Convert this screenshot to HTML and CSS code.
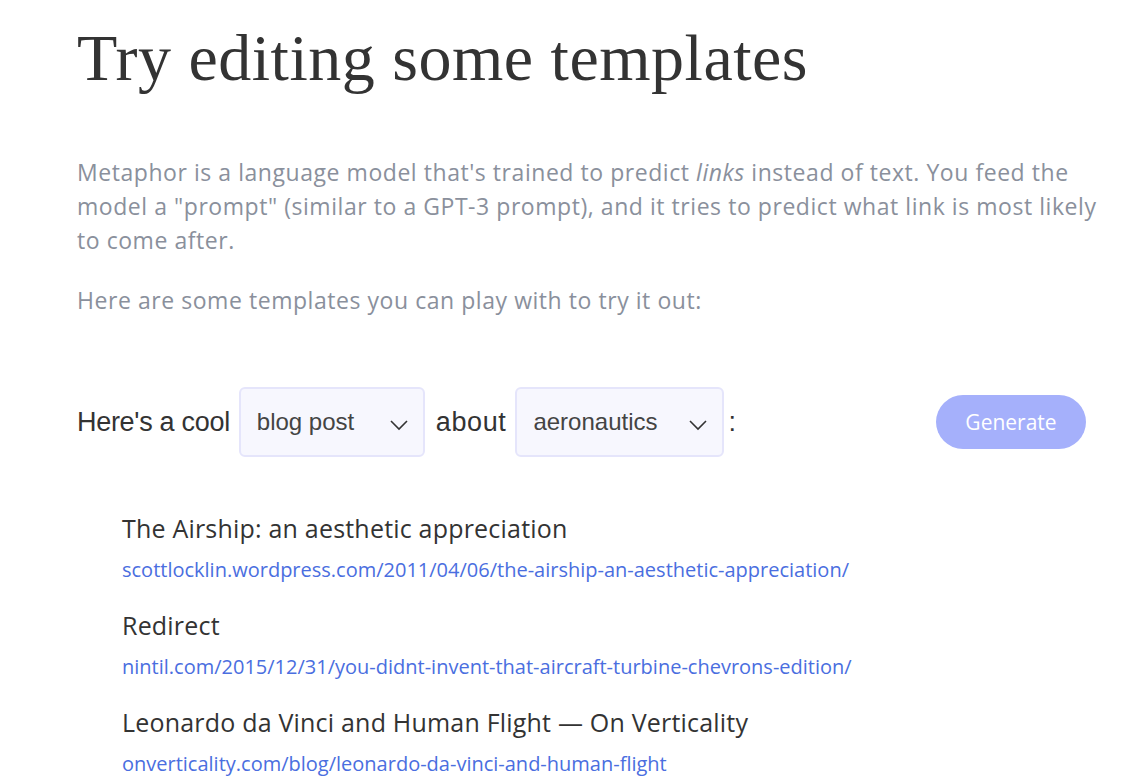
FILE: index.html
```html
<!DOCTYPE html>
<html>
<head>
<meta charset="utf-8">
<link rel="stylesheet" href="styles.css">
</head>
<body>
<main class="page">
  <h1 class="title">Try editing some templates</h1>
  <p class="intro">Metaphor is a language model that's trained to predict <em>links</em> instead of text. You feed the model a "prompt" (similar to a GPT-3 prompt), and it tries to predict what link is most likely to come after.</p>
  <p class="intro">Here are some templates you can play with to try it out:</p>

  <div class="prompt-row">
    <div class="prompt">
      <span class="word">Here's a cool</span>
      <div class="select">
        <span>blog post</span>
        <svg class="chev" viewBox="0 0 20 12" width="20" height="12"><path d="M2 2 L10 10 L18 2" fill="none" stroke="#333" stroke-width="1.6"/></svg>
      </div>
      <span class="word about">about</span>
      <div class="select wide">
        <span>aeronautics</span>
        <svg class="chev" viewBox="0 0 20 12" width="20" height="12"><path d="M2 2 L10 10 L18 2" fill="none" stroke="#333" stroke-width="1.6"/></svg>
      </div>
      <span class="word colon">:</span>
    </div>
    <button class="generate">Generate</button>
  </div>

  <ul class="results">
    <li class="result">
      <div class="r-title">The Airship: an aesthetic appreciation</div>
      <a class="r-url">scottlocklin.wordpress.com/2011/04/06/the-airship-an-aesthetic-appreciation/</a>
    </li>
    <li class="result">
      <div class="r-title">Redirect</div>
      <a class="r-url">nintil.com/2015/12/31/you-didnt-invent-that-aircraft-turbine-chevrons-edition/</a>
    </li>
    <li class="result">
      <div class="r-title">Leonardo da Vinci and Human Flight — On Verticality</div>
      <a class="r-url">onverticality.com/blog/leonardo-da-vinci-and-human-flight</a>
    </li>
  </ul>
</main>
</body>
</html>
```
FILE: styles.css
```css
html, body {
  margin: 0;
  padding: 0;
  background: #fff;
}
.page {
  padding: 18px 18px 0 77px;
  font-family: "Open Sans", "Noto Sans", sans-serif;
}
.title {
  margin: 0;
  font-family: "Liberation Serif", "DejaVu Serif", serif;
  font-weight: 400;
  font-size: 66px;
  line-height: 80px;
  color: #333;
  letter-spacing: 0.5px;
}
.intro {
  margin: 57px 0 0;
  font-size: 23px;
  line-height: 34px;
  letter-spacing: 0.55px;
  color: #8a909c;
}
.intro + .intro {
  margin-top: 26px;
}
.intro em {
  font-style: italic;
}
.prompt-row {
  margin: 70px 21px 0 0;
  display: flex;
  align-items: center;
  justify-content: space-between;
}
.prompt {
  display: flex;
  align-items: center;
  gap: 9px;
}
.word {
  font-family: "Liberation Sans", Arial, sans-serif;
  font-size: 27px;
  color: #333;
  letter-spacing: -0.3px;
}
.about {
  margin-left: 2px;
  letter-spacing: 0.6px;
}
.colon {
  margin-left: -5px;
}
.select {
  box-sizing: border-box;
  width: 186px;
  height: 70px;
  padding: 0 14px 0 16px;
  border: 2px solid #e5e5fb;
  border-radius: 6px;
  background: #f7f7fe;
  display: flex;
  align-items: center;
  justify-content: space-between;
  font-family: "Liberation Sans", Arial, sans-serif;
  font-size: 24px;
  color: #444;
}
.select.wide {
  width: 209px;
}
.chev {
  margin-top: 6px;
}
.generate {
  width: 150px;
  height: 54px;
  border: none;
  border-radius: 27px;
  background: #a5b0fb;
  color: #fff;
  font-family: "Open Sans", "Noto Sans", sans-serif;
  font-size: 21px;
}
.results {
  list-style: none;
  margin: 54px 0 0;
  padding: 0 0 0 45px;
}
.result {
  margin-bottom: 23px;
}
.r-title {
  font-size: 25px;
  line-height: 34px;
  letter-spacing: 0.2px;
  color: #333;
}
.r-url {
  display: block;
  margin-top: 10px;
  font-size: 20px;
  line-height: 30px;
  color: #4a6ee0;
}
```
